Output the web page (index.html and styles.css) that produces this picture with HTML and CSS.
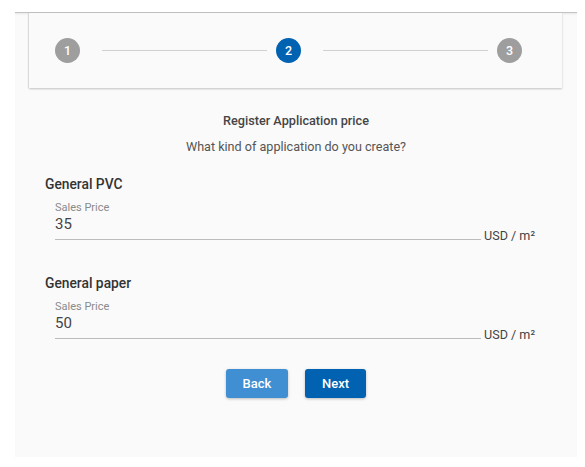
FILE: index.html
```html
<!DOCTYPE html>
<html>
<head>
<meta charset="utf-8">
<link rel="stylesheet" href="styles.css">
</head>
<body>
<div class="panel">
  <div class="card">
    <div class="step done">1</div>
    <div class="line"></div>
    <div class="step active">2</div>
    <div class="line"></div>
    <div class="step">3</div>
  </div>
  <div class="title">Register Application price</div>
  <div class="subtitle">What kind of application do you create?</div>

  <div class="group">
    <div class="group-name">General PVC</div>
    <div class="field-row">
      <div class="field">
        <div class="label">Sales Price</div>
        <div class="value">35</div>
      </div>
      <div class="suffix">USD / m²</div>
    </div>
  </div>

  <div class="group second">
    <div class="group-name">General paper</div>
    <div class="field-row">
      <div class="field">
        <div class="label">Sales Price</div>
        <div class="value">50</div>
      </div>
      <div class="suffix">USD / m²</div>
    </div>
  </div>

  <div class="actions">
    <button class="btn back">Back</button>
    <button class="btn next">Next</button>
  </div>
</div>
</body>
</html>
```

FILE: styles.css
```css
html, body {
  margin: 0;
  padding: 0;
  background: #ffffff;
  font-family: Roboto, "Liberation Sans", sans-serif;
}
body {
  padding-top: 12px;
}
.panel {
  margin-left: 15px;
  width: 562px;
  height: 445px;
  background: #fafafa;
  border-top: 1px solid #c4c4c4;
  box-sizing: border-box;
  box-shadow: inset 0 2px 2px -1px rgba(0,0,0,0.08);
}
.card {
  margin: 0 15px 0 14px;
  height: 75px;
  background: #fafafa;
  box-shadow: 0 1px 2px rgba(0,0,0,0.22), -1px 0 1px rgba(0,0,0,0.06);
  display: flex;
  align-items: center;
  padding: 0 40px 0 26px;
  box-sizing: border-box;
}
.step {
  width: 25px;
  height: 25px;
  border-radius: 50%;
  background: #9e9e9e;
  color: #fff;
  font-size: 12.5px;
  font-weight: 500;
  display: flex;
  align-items: center;
  justify-content: center;
  flex: none;
}
.step.active {
  background: #0062b1;
}
.line {
  flex: 1;
  height: 1px;
  background: #d0d0d0;
  margin: 0 9px 0 22px;
}
.title {
  margin-top: 25px;
  text-align: center;
  font-size: 12.7px;
  line-height: 16px;
  font-weight: 500;
  color: #454545;
}
.subtitle {
  margin-top: 10px;
  text-align: center;
  font-size: 12.6px;
  line-height: 16px;
  color: #555;
}
.group {
  margin-top: 21px;
  padding-left: 30px;
}
.group.second {
  margin-top: 35px;
}
.group-name {
  font-size: 13.8px;
  line-height: 16px;
  font-weight: 500;
  color: #333;
}
.field-row {
  display: flex;
  align-items: flex-end;
  padding-left: 10px;
  margin-top: 9px;
}
.field {
  width: 426px;
  border-bottom: 1px solid #bcbcbc;
  padding-bottom: 6px;
}
.label {
  font-size: 11px;
  line-height: 13px;
  color: #8a8a8a;
}
.value {
  font-size: 15px;
  line-height: 18px;
  color: #444;
  margin-top: 1px;
}
.suffix {
  margin-left: 3px;
  font-size: 12.6px;
  line-height: 14px;
  color: #444;
  margin-bottom: -3px;
}
.actions {
  display: flex;
  justify-content: center;
  gap: 17px;
  margin-top: 30px;
}
.btn {
  height: 29px;
  border: none;
  border-radius: 3px;
  color: #fff;
  font-family: Roboto, "Liberation Sans", sans-serif;
  font-size: 13px;
  font-weight: 500;
  box-shadow: 0 1px 3px rgba(0,0,0,0.25);
  padding: 0;
}
.btn.back {
  width: 62px;
  background: #3f8fd2;
}
.btn.next {
  width: 61px;
  background: #0062b1;
}
```
